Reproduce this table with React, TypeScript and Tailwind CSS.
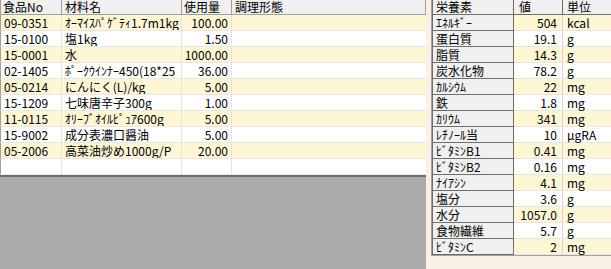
import React from "react";

const foods = [
  ["09-0351", "ｵｰﾏｲｽﾊﾟｹﾞﾃｨ1.7m1kg", "100.00"],
  ["15-0100", "塩1kg", "1.50"],
  ["15-0001", "水", "1000.00"],
  ["02-1405", "ﾎﾟｰｸｳｲﾝﾅｰ450(18*25", "36.00"],
  ["05-0214", "にんにく(L)/kg", "5.00"],
  ["15-1209", "七味唐辛子300g", "1.00"],
  ["11-0115", "ｵﾘｰﾌﾞｵｲﾙﾋﾟｭｱ600g", "5.00"],
  ["15-9002", "成分表濃口醤油", "5.00"],
  ["05-2006", "高菜油炒め1000g/P", "20.00"],
  ["", "", ""],
];

const nutrients = [
  ["ｴﾈﾙｷﾞｰ", "504", "kcal"],
  ["蛋白質", "19.1", "g"],
  ["脂質", "14.3", "g"],
  ["炭水化物", "78.2", "g"],
  ["ｶﾙｼｳﾑ", "22", "mg"],
  ["鉄", "1.8", "mg"],
  ["ｶﾘｳﾑ", "341", "mg"],
  ["ﾚﾁﾉｰﾙ当", "10", "μgRA"],
  ["ﾋﾞﾀﾐﾝB1", "0.41", "mg"],
  ["ﾋﾞﾀﾐﾝB2", "0.16", "mg"],
  ["ﾅｲｱｼﾝ", "4.1", "mg"],
  ["塩分", "3.6", "g"],
  ["水分", "1057.0", "g"],
  ["食物繊維", "5.7", "g"],
  ["ﾋﾞﾀﾐﾝC", "2", "mg"],
];

function FoodGrid() {
  return (
    <div className="w-[426px] flex flex-col bg-[#ababab]">
      <div className="bg-white border-b-2 border-[#6e6e6e]">
        {/* header */}
        <div className="grid grid-cols-[61px_120px_50px_1fr] h-[15px] leading-[14px] bg-[#f0f0f0] border-b border-[#a0a0a0] border-l border-l-[#a0a0a0]">
          <div className="pl-[2px] border-r border-[#a0a0a0]">食品No</div>
          <div className="pl-[3px] border-r border-[#a0a0a0]">材料名</div>
          <div className="pl-[2px] border-r border-[#a0a0a0]">使用量</div>
          <div className="pl-[3px] border-r border-[#a0a0a0]">調理形態</div>
        </div>
        {foods.map((r, i) => (
          <div
            key={i}
            className={`grid grid-cols-[61px_120px_50px_1fr] h-[16px] border-b border-[#e6e6e6] border-l border-l-[#a0a0a0] ${i % 2 === 0 && r[0] ? "bg-[#fff6d5]" : "bg-white"}`}
          >
            <div className="pl-[3px] border-r border-[#e3e3e3] overflow-hidden whitespace-nowrap">{r[0]}</div>
            <div className="pl-[3px] border-r border-[#e3e3e3] overflow-hidden whitespace-nowrap">{r[1]}</div>
            <div className="pr-[3px] text-right border-r border-[#e3e3e3] overflow-hidden whitespace-nowrap">{r[2]}</div>
            <div></div>
          </div>
        ))}
      </div>
      <div className="flex-1"></div>
    </div>
  );
}

function NutrientGrid() {
  return (
    <div className="flex-1 bg-[#faf0e6] pl-[5px]">
      <div className="border-l border-b border-[#a0a0a0] bg-white">
        <div className="grid grid-cols-[81px_49px_1fr] h-[15px] leading-[14px] bg-[#f0f0f0] border-b border-[#6e6e6e] border-l border-l-[#6e6e6e]">
          <div className="pl-[3px] border-r border-[#6e6e6e]">栄養素</div>
          <div className="pl-[5px] border-r border-[#6e6e6e]">値</div>
          <div className="pl-[4px]">単位</div>
        </div>
        {nutrients.map((r, i) => (
          <div key={i} className="grid grid-cols-[81px_49px_1fr] h-[16px] border-l border-[#6e6e6e]">
            <div className="pl-[3px] bg-[#f0f0f0] border-r border-b border-[#6e6e6e] whitespace-nowrap overflow-hidden">{r[0]}</div>
            <div className={`pr-[5px] text-right border-r border-b border-r-[#d4d4d4] border-b-[#e6e6e6] ${i % 2 === 0 ? "bg-[#fff6d5]" : "bg-white"}`}>{r[1]}</div>
            <div className={`pl-[4px] border-b border-[#e6e6e6] ${i % 2 === 0 ? "bg-[#fff6d5]" : "bg-white"}`}>{r[2]}</div>
          </div>
        ))}
      </div>
    </div>
  );
}

export default function App() {
  return (
    <div className="w-[611px] h-[269px] flex overflow-hidden text-[12px] leading-[15px] text-black font-['Noto_Sans_CJK_JP',sans-serif]">
      <FoodGrid />
      <NutrientGrid />
    </div>
  );
}
